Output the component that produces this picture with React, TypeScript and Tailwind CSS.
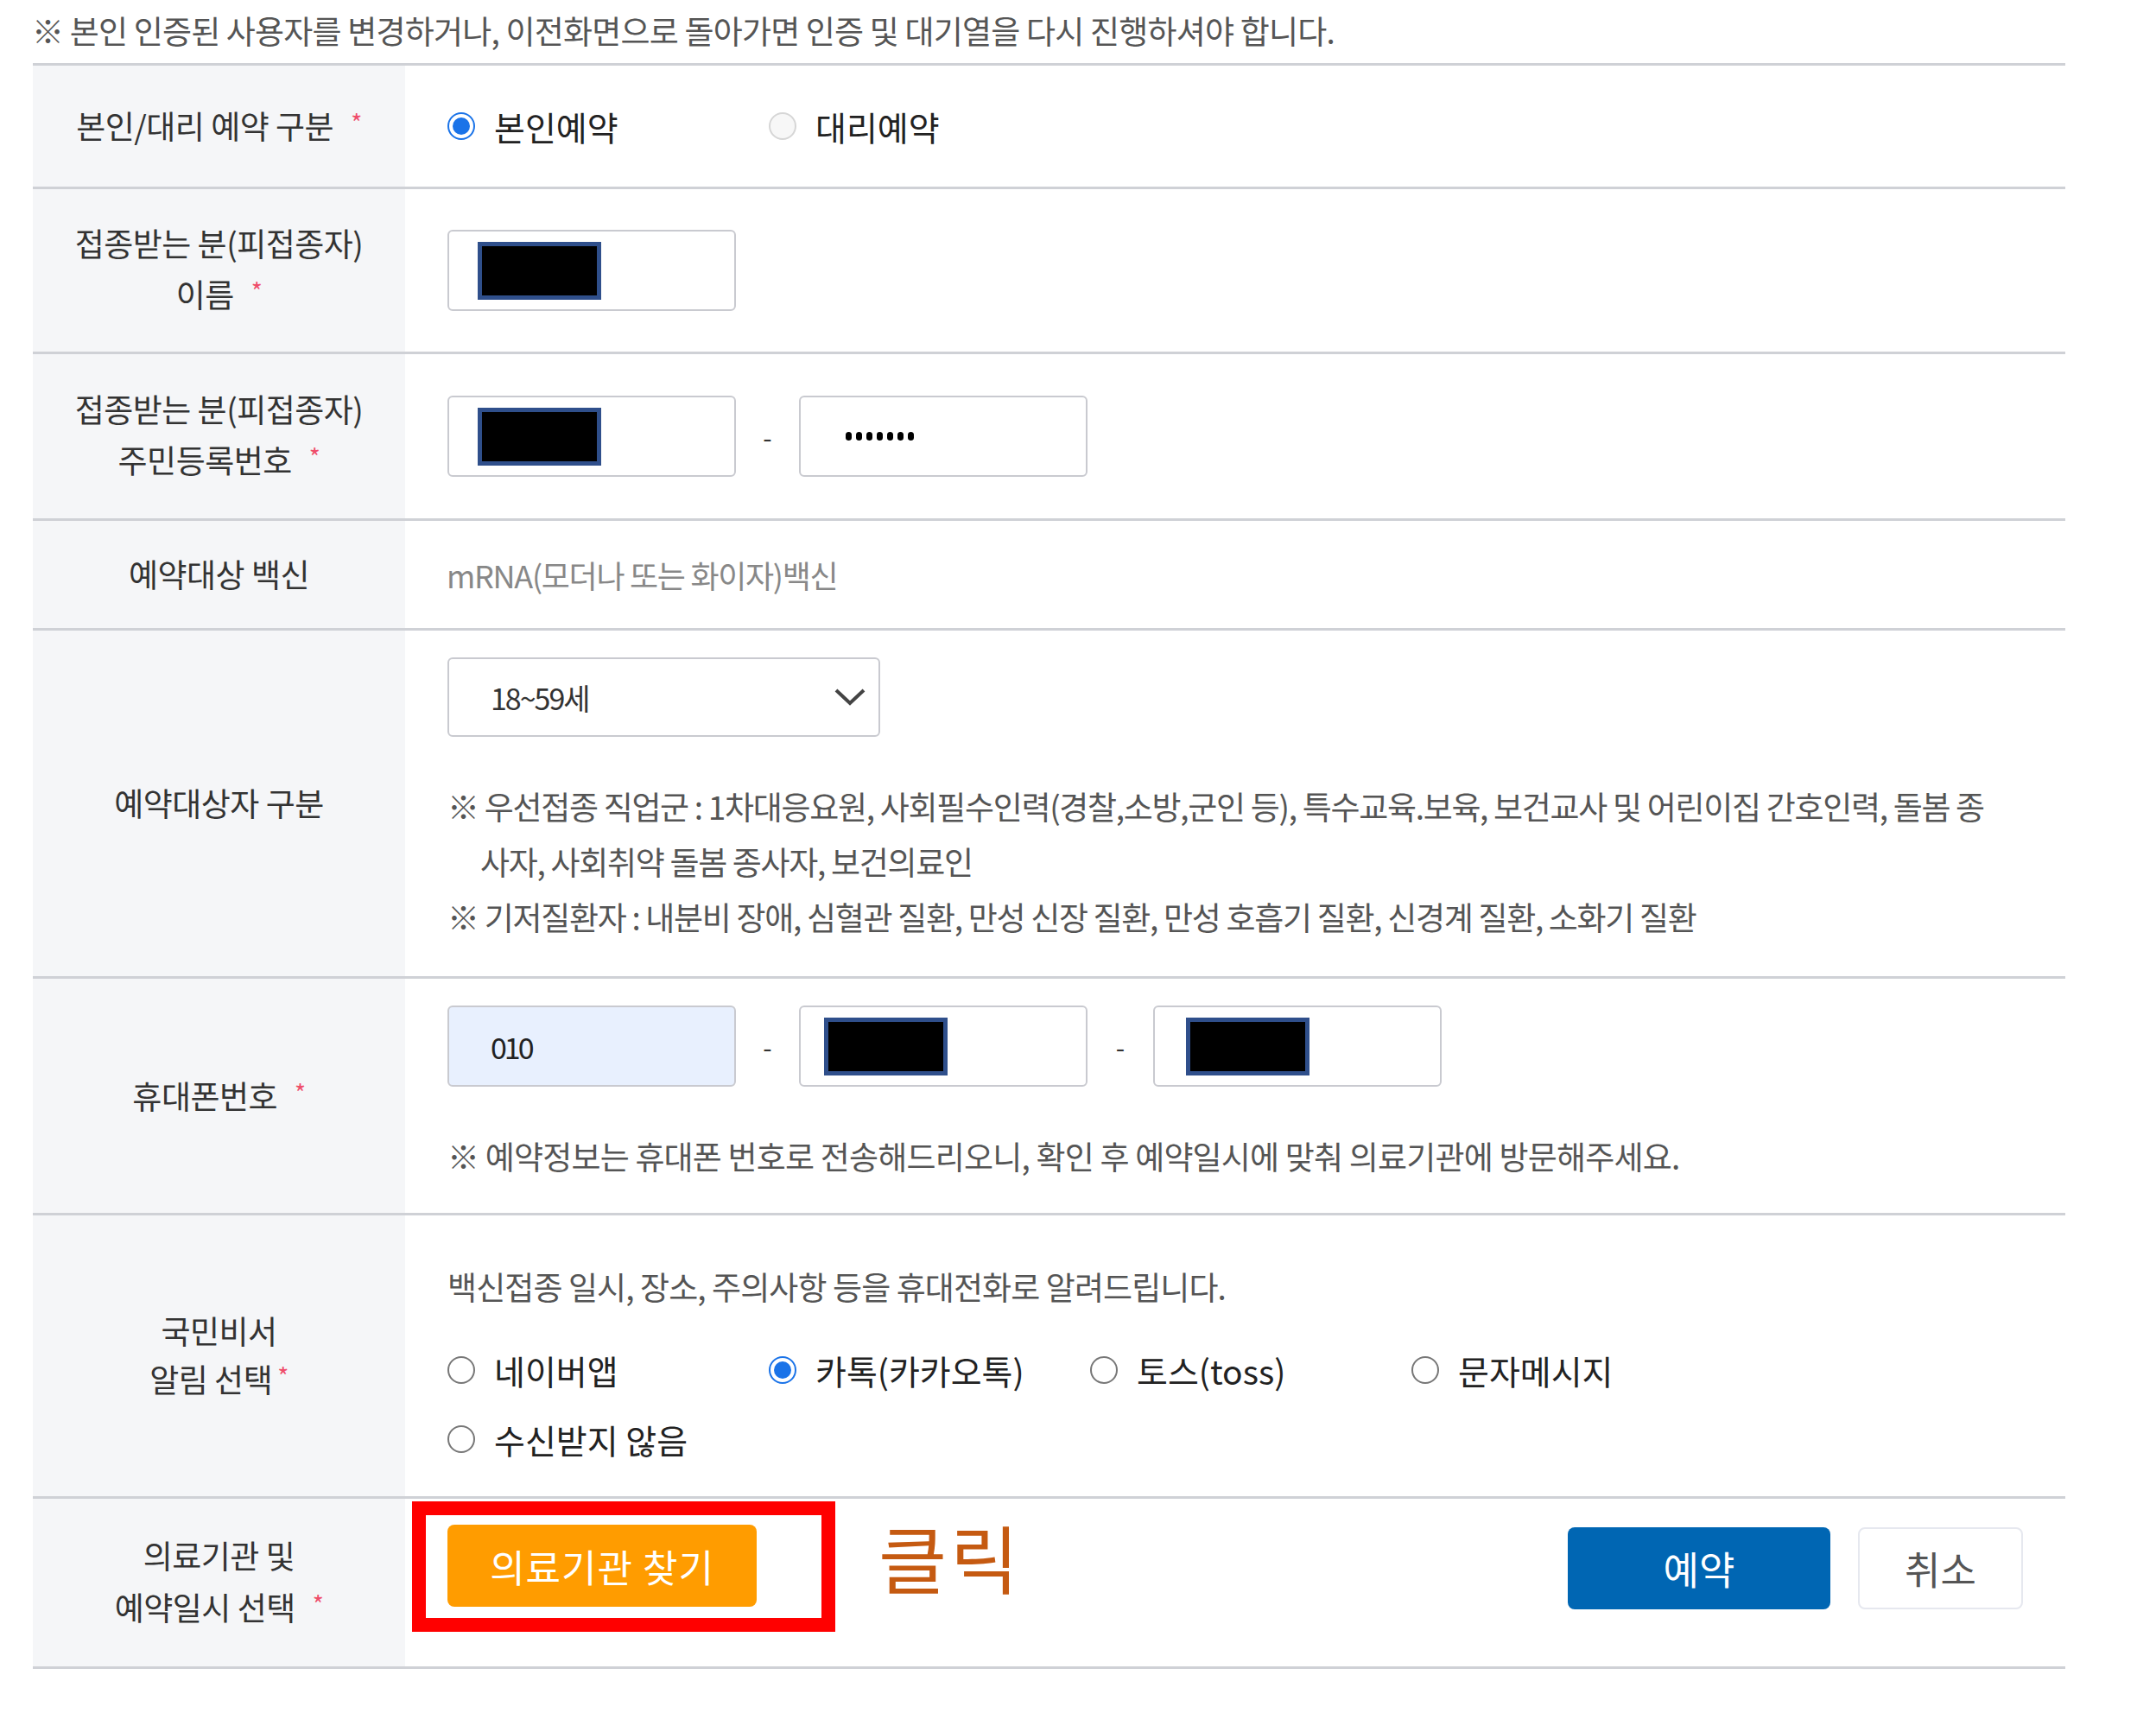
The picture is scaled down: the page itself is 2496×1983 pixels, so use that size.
import React from "react";

type Opt = { label: string; checked?: boolean; disabled?: boolean };

const Radio = ({ checked, disabled }: { checked?: boolean; disabled?: boolean }) => {
  if (checked) {
    return (
      <span className="flex h-[32px] w-[32px] shrink-0 items-center justify-center rounded-full border-[2px] border-[#1a73e8] bg-white">
        <span className="h-[20px] w-[20px] rounded-full bg-[#1a73e8]" />
      </span>
    );
  }
  return (
    <span
      className={
        disabled
          ? "h-[32px] w-[32px] shrink-0 rounded-full border-[2px] border-[#d6d6d6] bg-[#f7f7f7]"
          : "h-[32px] w-[32px] shrink-0 rounded-full border-[2px] border-[#777777] bg-white"
      }
    />
  );
};

const RadioItem = ({ opt }: { opt: Opt }) => (
  <div className="flex w-[372px] items-center gap-[22px]">
    <Radio checked={opt.checked} disabled={opt.disabled} />
    <span className="text-[39px] leading-[64px] text-[#222]">{opt.label}</span>
  </div>
);

const Star = ({ gap = "ml-[20px]" }: { gap?: string }) => (
  <span className={`${gap} relative -top-[8px] text-[28px] text-[#ef4d6a]`}>*</span>
);

const Redact = () => (
  <div className="h-[67px] w-[143px] border-[5px] border-[#2f4f8b] bg-black" />
);

const Dots = () => (
  <div className="flex gap-[5px]">
    {[0, 1, 2, 3, 4, 5, 6].map((i) => (
      <span key={i} className="h-[10px] w-[7px] rounded-full bg-black" />
    ))}
  </div>
);

const Row = ({ h, label, children }: { h: string; label: React.ReactNode; children: React.ReactNode }) => (
  <div className={`flex ${h} border-b-[3px] border-[#cfd1d6]`}>
    <div className="flex w-[431px] shrink-0 items-center justify-center bg-[#f5f6f8] text-center text-[37px] tracking-[-0.5px] text-[#333]">
      {label}
    </div>
    <div className="flex-1">{children}</div>
  </div>
);

const noticeOpts: Opt[] = [
  { label: "네이버앱" },
  { label: "카톡(카카오톡)", checked: true },
  { label: "토스(toss)" },
  { label: "문자메시지" },
];

const inputBox = "flex h-[94px] w-[334px] items-center rounded-[6px] border-[2px] border-[#c9cad0]";

export default function App() {
  return (
    <div className="h-[1983px] w-[2496px] bg-white font-['Noto_Sans_CJK_KR',sans-serif]">
      {/* notice */}
      <div className="flex h-[73px] items-center pl-[37px] pb-[2px]">
        <p className="text-[37px] tracking-[-0.8px] text-[#555]">
          ※ 본인 인증된 사용자를 변경하거나, 이전화면으로 돌아가면 인증 및 대기열을 다시 진행하셔야 합니다.
        </p>
      </div>

      <div className="ml-[38px] w-[2353px] border-t-[3px] border-[#cfd1d6]">
        <Row h="h-[143px]" label={<span>본인/대리 예약 구분<Star /></span>}>
          <div className="flex h-full items-center pl-[49px]">
            <RadioItem opt={{ label: "본인예약", checked: true }} />
            <RadioItem opt={{ label: "대리예약", disabled: true }} />
          </div>
        </Row>

        <Row
          h="h-[191px]"
          label={
            <div className="leading-[59px]">
              <div>접종받는 분(피접종자)</div>
              <div>이름<Star /></div>
            </div>
          }
        >
          <div className="flex h-full items-center pl-[49px]">
            <div className={`${inputBox} pl-[33px]`}>
              <Redact />
            </div>
          </div>
        </Row>

        <Row
          h="h-[193px]"
          label={
            <div className="leading-[59px]">
              <div>접종받는 분(피접종자)</div>
              <div>주민등록번호<Star /></div>
            </div>
          }
        >
          <div className="flex h-full items-center pl-[49px]">
            <div className={`${inputBox} pl-[33px]`}>
              <Redact />
            </div>
            <span className="w-[73px] text-center text-[30px] text-[#333]">-</span>
            <div className={`${inputBox} pl-[52px]`}>
              <Dots />
            </div>
          </div>
        </Row>

        <Row h="h-[127px]" label={<span>예약대상 백신</span>}>
          <div className="flex h-full items-center pl-[48px] text-[36px] tracking-[-1.3px] text-[#888]">
            mRNA(모더나 또는 화이자)백신
          </div>
        </Row>

        <Row h="h-[403px]" label={<span>예약대상자 구분</span>}>
          <div className="pl-[49px] pt-[31px]">
            <div className="flex h-[92px] w-[501px] items-center justify-between rounded-[6px] border-[2px] border-[#c9cad0] pl-[48px] pr-[14px]">
              <span className="text-[34px] tracking-[-2px] text-[#333]">18~59세</span>
              <svg width="38" height="24" viewBox="0 0 38 24">
                <polyline points="3,4 19,19 35,4" fill="none" stroke="#444" strokeWidth="4" />
              </svg>
            </div>
            <div className="mt-[48px] text-[37px] leading-[64px] tracking-[-1.3px] text-[#555]">
              <div className="whitespace-nowrap">
                ※ 우선접종 직업군 : 1차대응요원, 사회필수인력(경찰,소방,군인 등), 특수교육.보육, 보건교사 및 어린이집 간호인력, 돌봄 종
              </div>
              <div className="whitespace-nowrap pl-[38px]">사자, 사회취약 돌봄 종사자, 보건의료인</div>
              <div className="whitespace-nowrap">
                ※ 기저질환자 : 내분비 장애, 심혈관 질환, 만성 신장 질환, 만성 호흡기 질환, 신경계 질환, 소화기 질환
              </div>
            </div>
          </div>
        </Row>

        <Row h="h-[274px]" label={<span>휴대폰번호<Star /></span>}>
          <div className="pl-[49px] pt-[31px]">
            <div className="flex items-center">
              <div className={`${inputBox} bg-[#e8f0fe] pl-[48px]`}>
                <span className="text-[34px] tracking-[-3px] text-[#222]">010</span>
              </div>
              <span className="w-[73px] text-center text-[30px] text-[#333]">-</span>
              <div className={`${inputBox} pl-[27px]`}>
                <Redact />
              </div>
              <span className="w-[76px] text-center text-[30px] text-[#333]">-</span>
              <div className={`${inputBox} pl-[36px]`}>
                <Redact />
              </div>
            </div>
            <div className="mt-[48px] whitespace-nowrap text-[37px] leading-[64px] tracking-[-0.8px] text-[#555]">
              ※ 예약정보는 휴대폰 번호로 전송해드리오니, 확인 후 예약일시에 맞춰 의료기관에 방문해주세요.
            </div>
          </div>
        </Row>

        <Row
          h="h-[328px]"
          label={
            <div className="leading-[56px]">
              <div>국민비서</div>
              <div>알림 선택<Star gap="ml-[6px]" /></div>
            </div>
          }
        >
          <div className="pl-[49px] pt-[50px]">
            <div className="whitespace-nowrap text-[37px] leading-[64px] tracking-[-0.9px] text-[#555]">
              백신접종 일시, 장소, 주의사항 등을 휴대전화로 알려드립니다.
            </div>
            <div className="mt-[33px] flex">
              {noticeOpts.map((o) => (
                <RadioItem key={o.label} opt={o} />
              ))}
            </div>
            <div className="mt-[16px] flex">
              <RadioItem opt={{ label: "수신받지 않음" }} />
            </div>
          </div>
        </Row>

        <Row
          h="h-[197px]"
          label={
            <div className="leading-[60px]">
              <div>의료기관 및</div>
              <div>예약일시 선택<Star /></div>
            </div>
          }
        >
          <div className="flex h-full items-start pl-[8px] pr-[49px] pt-[3px]">
            <div className="border-[16px] border-[#ff0000] pb-[13px] pl-[25px] pr-[75px] pt-[11px]">
              <button className="h-[95px] w-[358px] rounded-[8px] bg-[#ff9c00] text-[44px] tracking-[1px] text-white">
                의료기관 찾기
              </button>
            </div>
            <span className="ml-[50px] mt-[17px] text-[86px] leading-[94px] tracking-[4px] text-[#c55a11]">클릭</span>
            <div className="ml-auto mt-[30px] flex gap-[32px]">
              <button className="h-[95px] w-[304px] rounded-[8px] bg-[#0066b3] text-[45px] text-white">예약</button>
              <button className="h-[95px] w-[191px] rounded-[8px] border-[2px] border-[#e6e8ef] bg-white text-[45px] text-[#555]">
                취소
              </button>
            </div>
          </div>
        </Row>
      </div>
    </div>
  );
}
